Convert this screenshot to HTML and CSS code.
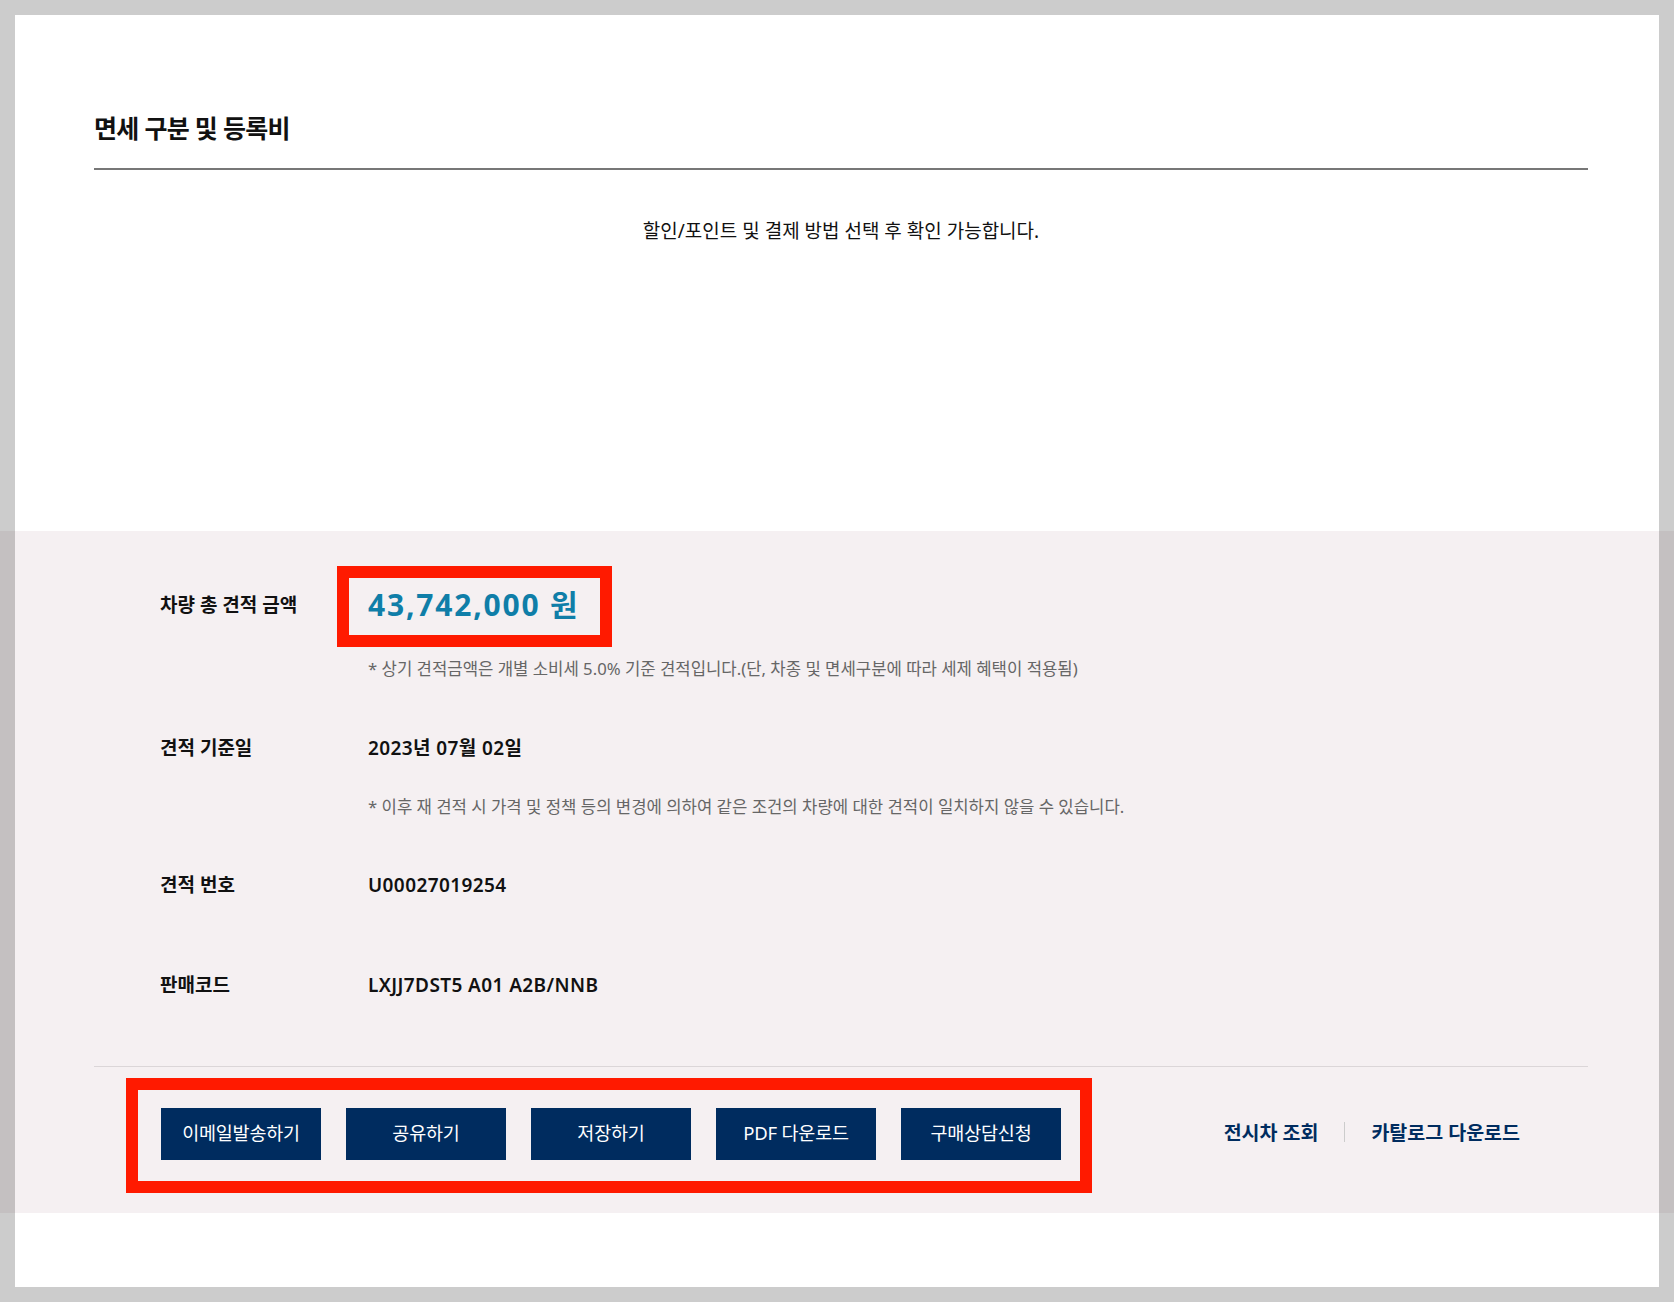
FILE: index.html
```html
<!DOCTYPE html>
<html lang="ko">
<head>
    <meta charset="UTF-8">
    <meta name="viewport" content="width=device-width, initial-scale=1.0">
    <title>견적 요약</title>
    <link rel="stylesheet" href="styles.css">
</head>
<body>

    <div class="frame"></div>

    <section class="tax-section">
        <div class="inner">
            <h2 class="section-title">면세 구분 및 등록비</h2>
            <p class="section-desc">할인/포인트 및 결제 방법 선택 후 확인 가능합니다.</p>
        </div>
    </section>

    <section class="summary">
        <div class="inner">
            <div class="rows">
                <div class="row">
                    <div class="row-label">차량 총 견적 금액</div>
                    <div class="row-body">
                        <div class="row-value"><span class="total-price mark">43,742,000 원</span></div>
                        <p class="row-note note-total">* 상기 견적금액은 개별 소비세 5.0% 기준 견적입니다.(단, 차종 및 면세구분에 따라 세제 혜택이 적용됨)</p>
                    </div>
                </div>

                <div class="row row-date">
                    <div class="row-label">견적 기준일</div>
                    <div class="row-body">
                        <div class="row-value">2023년 07월 02일</div>
                        <p class="row-note">* 이후 재 견적 시 가격 및 정책 등의 변경에 의하여 같은 조건의 차량에 대한 견적이 일치하지 않을 수 있습니다.</p>
                    </div>
                </div>

                <div class="row row-number">
                    <div class="row-label">견적 번호</div>
                    <div class="row-body">
                        <div class="row-value">U00027019254</div>
                    </div>
                </div>

                <div class="row row-code">
                    <div class="row-label">판매코드</div>
                    <div class="row-body">
                        <div class="row-value">LXJJ7DST5 A01 A2B/NNB</div>
                    </div>
                </div>
            </div>

            <div class="summary-foot">
                <div class="btn-group mark mark-btns">
                    <button class="btn">이메일발송하기</button>
                    <button class="btn">공유하기</button>
                    <button class="btn">저장하기</button>
                    <button class="btn">PDF 다운로드</button>
                    <button class="btn">구매상담신청</button>
                </div>
                <div class="foot-links">
                    <a href="#">전시차 조회</a>
                    <span class="divider"></span>
                    <a href="#">카탈로그 다운로드</a>
                </div>
            </div>
        </div>
    </section>

</body>
</html>
```

FILE: styles.css
```css
html, body {
    margin: 0;
    padding: 0;
}
body {
    font-family: "Noto Sans", "Noto Sans CJK KR", sans-serif;
    color: #111;
    background-color: #fff;
    min-height: 1302px;
}
.frame {
    position: fixed;
    top: 0;
    left: 0;
    right: 0;
    bottom: 0;
    border: 15px solid rgba(0, 0, 0, 0.2);
    pointer-events: none;
    z-index: 10;
}
.inner {
    margin: 0 86px 0 94px;
}

/* top block */
.tax-section {
    padding: 110px 0 287px;
}
.section-title {
    margin: 0;
    padding-bottom: 22px;
    border-bottom: 2px solid #777;
    font-size: 25px;
    line-height: 36px;
    font-weight: 700;
    letter-spacing: -0.7px;
}
.section-desc {
    margin: 48px 0 0;
    text-align: center;
    font-size: 19px;
    line-height: 26px;
    color: #111;
}

/* summary band */
.summary {
    background-color: #f5f0f2;
    padding-top: 54px;
    padding-bottom: 53px;
}
.rows {
    padding: 0 66px;
}
.row {
    display: grid;
    grid-template-columns: 208px 1fr;
}
.row-date {
    margin-top: 47px;
}
.row-number {
    margin-top: 46px;
}
.row-code {
    margin-top: 60px;
}
.row-label {
    font-size: 19px;
    line-height: 40px;
    font-weight: 700;
}
.row-value {
    font-size: 19px;
    line-height: 40px;
    font-weight: 600;
    letter-spacing: 0.4px;
}
.row-note {
    margin: 27px 0 0;
    font-size: 16.7px;
    line-height: 24px;
    color: #666;
}
.row-note.note-total {
    margin-top: 28px;
}
.total-price {
    font-size: 30px;
    font-weight: 700;
    letter-spacing: 1.8px;
    color: #0f7ea8;
}

/* red highlight boxes */
.mark {
    position: relative;
}
.mark::after {
    content: "";
    position: absolute;
    top: -18px;
    bottom: -22px;
    left: -31px;
    right: -33px;
    border: 12px solid #ff1a00;
    pointer-events: none;
}
.mark-btns::after {
    top: -30px;
    bottom: -33px;
    left: -35px;
    right: -31px;
}

/* footer buttons */
.summary-foot {
    margin-top: 61px;
    border-top: 1px solid #dbd6d8;
    padding: 41px 68px 0 67px;
    display: flex;
    justify-content: space-between;
    align-items: center;
}
.btn-group {
    display: flex;
    gap: 25px;
}
.btn {
    width: 160px;
    height: 52px;
    padding: 0 0 4px;
    border: none;
    background-color: #002c5f;
    color: #fff;
    font-family: inherit;
    font-size: 18.5px;
    letter-spacing: -0.2px;
    cursor: pointer;
}
.foot-links {
    display: flex;
    align-items: center;
    margin-bottom: 5px;
}
.foot-links a {
    color: #002c5f;
    font-size: 19.5px;
    font-weight: 700;
    text-decoration: none;
}
.divider {
    width: 1px;
    height: 20px;
    margin: 0 26px;
    background-color: #ccc;
}
```
